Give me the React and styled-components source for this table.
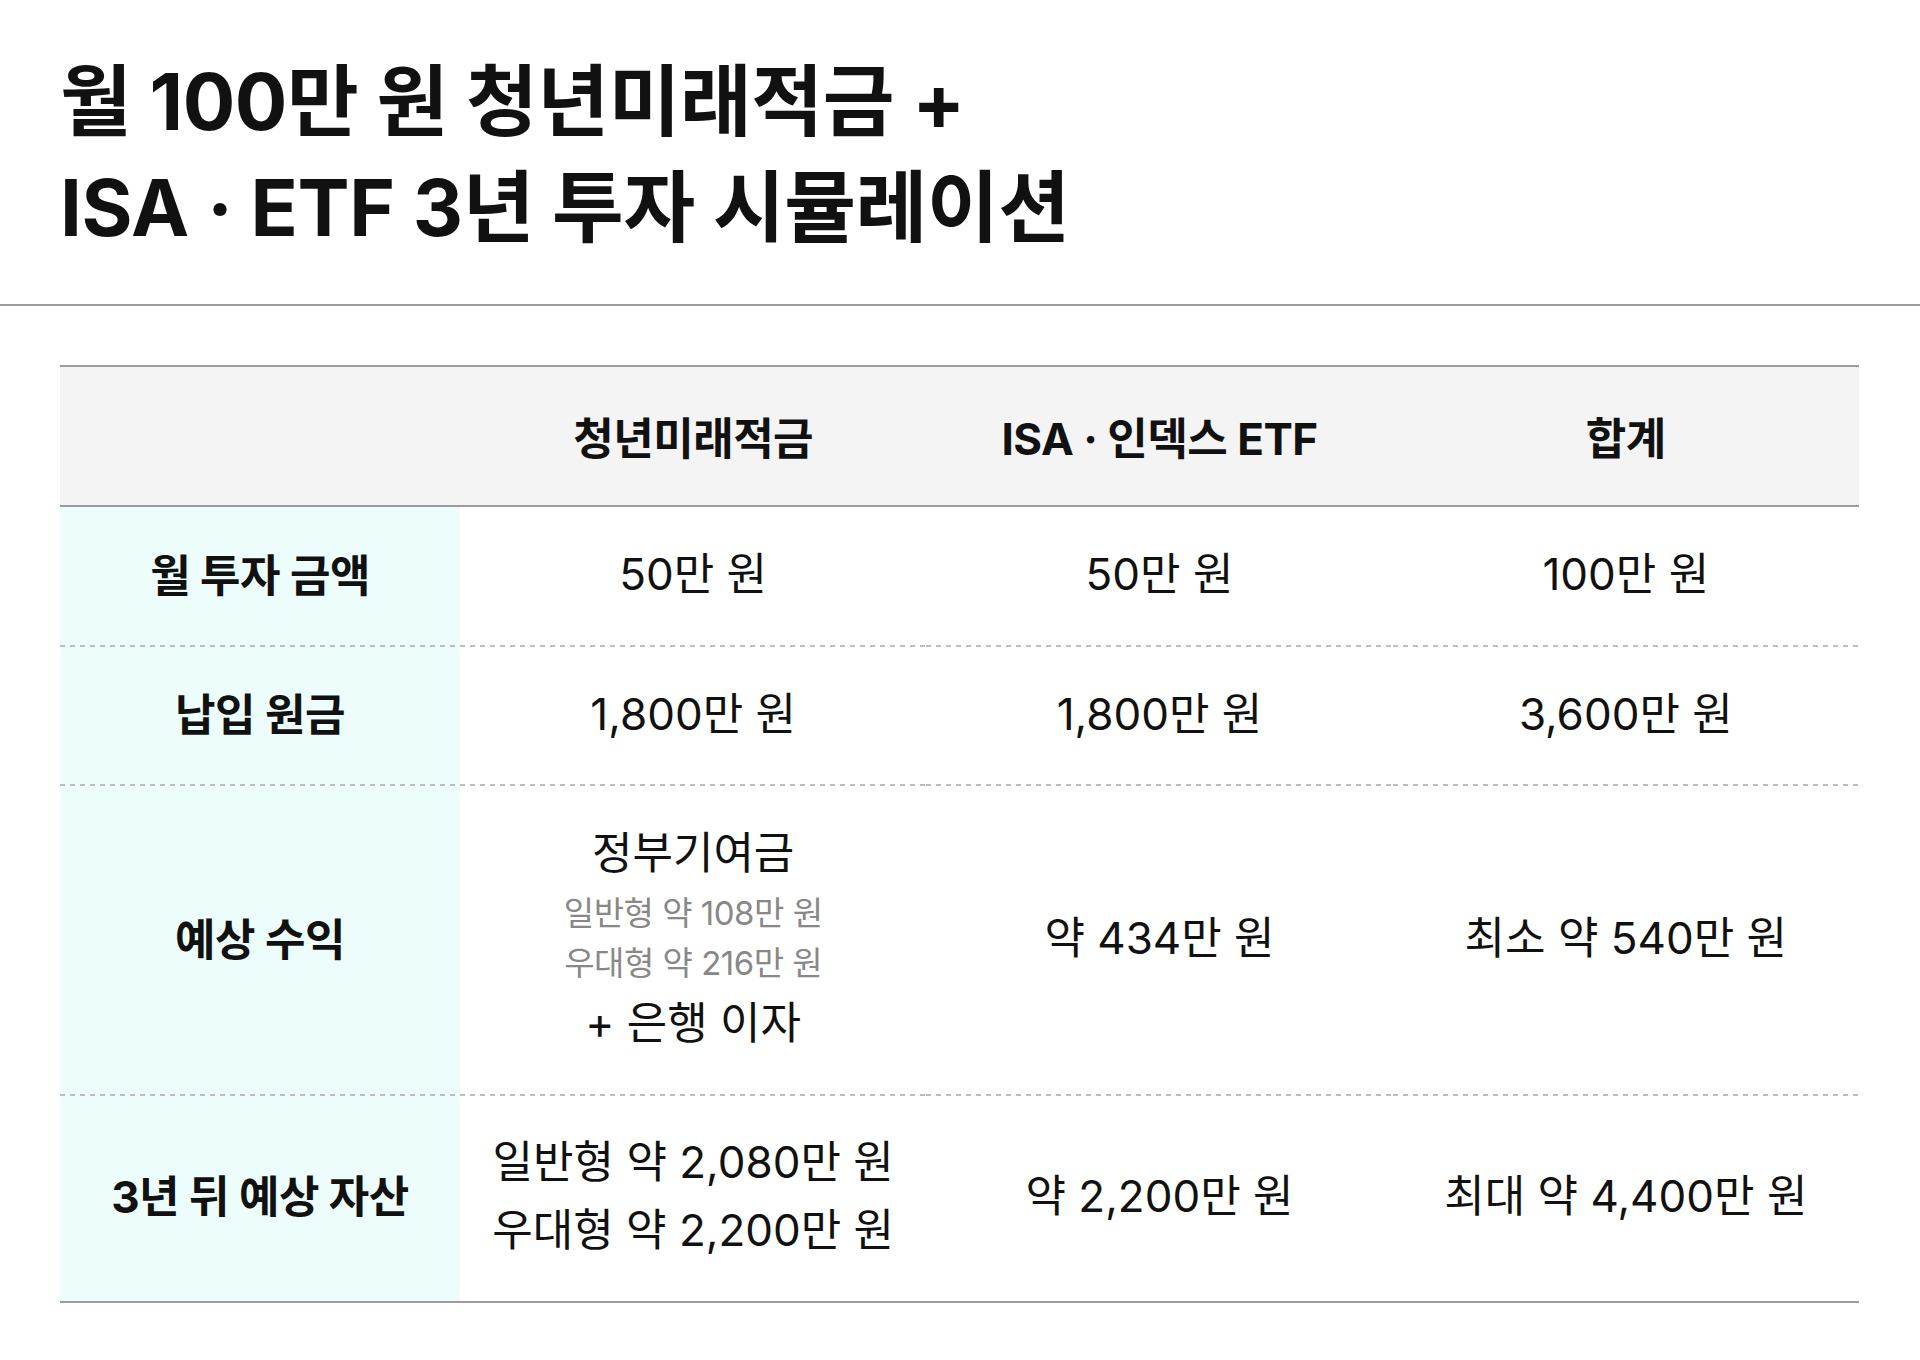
import React from 'react';
import styled, { createGlobalStyle } from 'styled-components';

const GlobalStyle = createGlobalStyle`
  body {
    margin: 0;
    background: #ffffff;
    font-family: Inter, 'Noto Sans CJK KR', sans-serif;
    color: #111111;
  }
`;

const rows = [
  {
    label: '월 투자 금액',
    height: 140,
    cells: [['50만 원'], ['50만 원'], ['100만 원']],
  },
  {
    label: '납입 원금',
    height: 139,
    cells: [['1,800만 원'], ['1,800만 원'], ['3,600만 원']],
  },
  {
    label: '예상 수익',
    height: 310,
    cells: [null, ['약 434만 원'], ['최소 약 540만 원']],
  },
  {
    label: '3년 뒤 예상 자산',
    height: 207,
    last: true,
    cells: [
      ['일반형 약 2,080만 원', '우대형 약 2,200만 원'],
      ['약 2,200만 원'],
      ['최대 약 4,400만 원'],
    ],
  },
];

const App = () => {
  return (
    <Page>
      <GlobalStyle />
      <Title>
        월 100만 원 청년미래적금 +
        <br />
        ISA · ETF 3년 투자 시뮬레이션
      </Title>
      <Divider />
      <Table>
        <HeadCell />
        <HeadCell>청년미래적금</HeadCell>
        <HeadCell>ISA · 인덱스 ETF</HeadCell>
        <HeadCell>합계</HeadCell>

        {rows.map((row) => (
          <React.Fragment key={row.label}>
            <LabelCell $h={row.height} $last={row.last}>
              {row.label}
            </LabelCell>
            {row.cells.map((lines, i) => (
              <Cell key={i} $h={row.height} $last={row.last}>
                {lines === null ? (
                  <>
                    <Line>정부기여금</Line>
                    <SubLine>일반형 약 108만 원</SubLine>
                    <SubLine>우대형 약 216만 원</SubLine>
                    <Line>+ 은행 이자</Line>
                  </>
                ) : (
                  lines.map((t) => (
                    <Line key={t} $tall={lines.length > 1}>
                      {t}
                    </Line>
                  ))
                )}
              </Cell>
            ))}
          </React.Fragment>
        ))}
      </Table>
    </Page>
  );
};

const Page = styled.div`
  width: 1920px;
  padding-bottom: 60px;
`;

const Title = styled.h1`
  margin: 0;
  padding: 49px 60px 43px;
  font-size: 78px;
  line-height: 106px;
  font-weight: 700;
  letter-spacing: -0.4px;
  color: #111111;
`;

const Divider = styled.hr`
  margin: 0;
  border: none;
  height: 2px;
  background: #9b9d9f;
`;

const Table = styled.div`
  margin: 59px 61px 0 60px;
  display: grid;
  grid-template-columns: 400px 1fr 1fr 1fr;
`;

const HeadCell = styled.div`
  height: 138px;
  display: flex;
  align-items: center;
  justify-content: center;
  background: #f4f4f4;
  border-top: 2px solid #9c9c9c;
  border-bottom: 2px solid #9c9c9c;
  font-size: 44px;
  font-weight: 700;
  letter-spacing: -0.5px;
`;

const BaseCell = styled.div`
  box-sizing: border-box;
  height: ${(p) => p.$h}px;
  padding-bottom: 6px;
  display: flex;
  flex-direction: column;
  align-items: center;
  justify-content: center;
  border-bottom: ${(p) => (p.$last ? '2px solid #9c9c9c' : 'none')};
  background-image: ${(p) =>
    p.$last
      ? 'none'
      : 'repeating-linear-gradient(to right, #bdbdbd 0 5px, transparent 5px 10px)'};
  background-size: 100% 2px;
  background-position: bottom left;
  background-repeat: no-repeat;
`;

const LabelCell = styled(BaseCell)`
  background-color: #edfdfb;
  font-size: 44px;
  font-weight: 700;
  letter-spacing: -0.5px;
  padding-bottom: 9px;
`;

const Cell = styled(BaseCell)`
  background-color: #ffffff;
`;

const Line = styled.div`
  font-size: 44px;
  line-height: ${(p) => (p.$tall ? '68px' : '70px')};
  font-weight: 400;
  letter-spacing: 0;
  color: #111111;
`;

const SubLine = styled.div`
  font-size: 33px;
  line-height: 50px;
  font-weight: 400;
  letter-spacing: -0.5px;
  color: #888888;
`;

export default App;
